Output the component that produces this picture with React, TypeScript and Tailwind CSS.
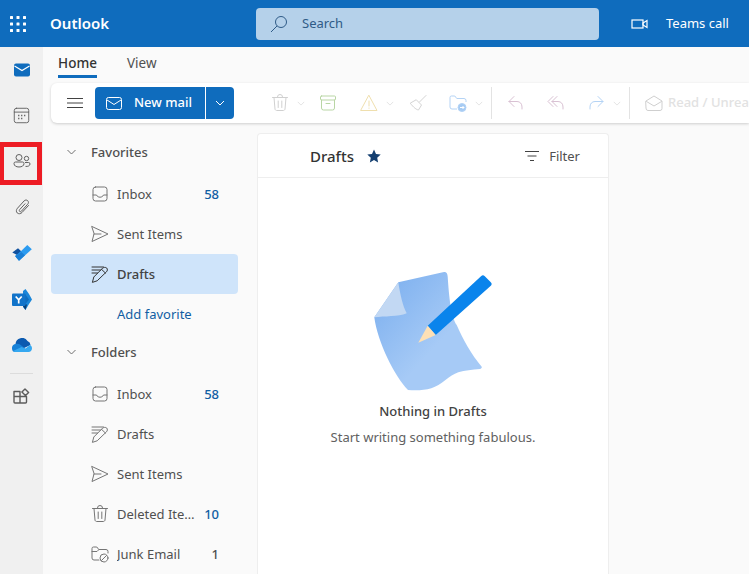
import type { ReactNode } from "react"

function Icon({ size = 20, className = "", children }: { size?: number; className?: string; children: ReactNode }) {
  return (
    <svg width={size} height={size} viewBox="0 0 20 20" fill="none" stroke="currentColor" strokeWidth={1} strokeLinecap="round" strokeLinejoin="round" className={className}>
      {children}
    </svg>
  )
}

const Chevron = ({ className = "" }: { className?: string }) => (
  <svg width="10" height="6" viewBox="0 0 10 6" fill="none" stroke="currentColor" className={className}>
    <path d="M1 1l4 4 4-4" />
  </svg>
)

const InboxIcon = () => (
  <Icon>
    <rect x="3" y="3" width="14" height="14" rx="2.5" />
    <path d="M3 11h3.5c.6 1.4 1.9 2.2 3.5 2.2s2.9-.8 3.5-2.2H17" />
  </Icon>
)
const SentIcon = () => (
  <Icon>
    <path d="M2 2.5L18 10 2 17.5 4 10zM4 10H11" />
  </Icon>
)
const DraftIcon = () => (
  <Icon>
    <path d="M2 3h11.500M2 6h8.500M2 9h5.500M2.500 18l1.300-5 8.700-8.700c1-1 3.200-1.300 4.200-.3 1 1.200.8 2.800-.2 3.800L7.500 16.500zM11.500 5.300l4 3.800" />
  </Icon>
)
const TrashIcon = () => (
  <Icon>
    <path d="M2.500 4.500h15M7.500 4.500V4a2.500 2.500 0 015 0v.5M4 4.500l1 11.500c.1 1 1 1.500 1.800 1.500h6.400c.8 0 1.700-.5 1.800-1.500l1-11.500M8.200 8v6.500M11.800 8v6.500" />
  </Icon>
)
const JunkIcon = () => (
  <Icon>
    <path d="M9 16H4a2 2 0 01-2-2V4.500A1.500 1.500 0 013.500 3h3.300l2 2.500H16a2 2 0 012 2V9M2 7.500h5l2-2" />
    <circle cx="14" cy="14" r="4" />
    <path d="M11.500 16.500l5-5" />
  </Icon>
)

function NavRow({ icon, label, count, active }: { icon?: ReactNode; label: string; count?: string; active?: boolean }) {
  return (
    <div className={`flex h-10 items-center rounded pl-[39px] pr-[19px] ${active ? "bg-[#cfe4fa] font-medium text-[#424242]" : "text-[#505050]"}`}>
      {icon ? <span className={`flex w-[27px] ${active ? "text-[#333333]" : "text-[#757575]"}`}>{icon}</span> : <span className="w-[27px]" />}
      <span className="min-w-0 flex-1 truncate pr-[9px] pt-[2px]">{label}</span>
      {count && <span className={`pt-[2px] font-medium ${count === "1" ? "text-[#505050]" : "text-[#115ea3]"}`}>{count}</span>}
    </div>
  )
}

function NavHeading({ label }: { label: string }) {
  return (
    <div className="flex h-10 items-center pb-1 pl-[15px] font-medium text-[#505050]">
      <Chevron className="mr-[14px] h-[6px] w-[11px] text-[#707070]" />
      <span className="pt-[2px]">{label}</span>
    </div>
  )
}

function RailItem({ first, children }: { first?: boolean; children: ReactNode }) {
  return <div className={`flex items-center justify-center text-[#616161] ${first ? "h-[45px]" : "h-[46px]"}`}>{children}</div>
}

function ToolSlot({ className, chevron, children }: { className: string; chevron?: boolean; children: ReactNode }) {
  return (
    <div className={`flex shrink-0 items-center gap-[7px] ${className}`}>
      {children}
      {chevron && <Chevron className="h-[5px] w-[8px] text-[#dddddd]" />}
    </div>
  )
}

export default function App() {
  return (
    <div className="relative flex h-[574px] w-[749px] flex-col overflow-hidden bg-[#fafafa] font-['Noto_Sans',sans-serif] text-[13px] text-[#424242]">
      <header className="flex h-[47px] shrink-0 items-center bg-[#0f6cbd] text-white">
        <div className="flex w-[50px] justify-center pr-[14px]">
          <svg width="16" height="16" viewBox="0 0 16 16" fill="white">
            {[0, 6.5, 13].map((y) =>
              [0, 6.5, 13].map((x) => <rect key={`${x}-${y}`} x={x} y={y} width="3" height="3" rx="0.5" />),
            )}
          </svg>
        </div>
        <span className="w-[206px] text-[15px] font-semibold">Outlook</span>
        <div className="flex h-[32px] w-[343px] items-center rounded bg-[#b5d1ea] pl-[14px] text-[#2f5b87]">
          <svg width="18" height="18" viewBox="0 0 18 18" fill="none" stroke="currentColor" className="mr-[14px]">
            <circle cx="11" cy="7" r="5.500" />
            <path d="M7 11l-6 6" />
          </svg>
          Search
        </div>
        <svg width="18" height="12" viewBox="0 0 18 12" fill="none" stroke="white" strokeWidth="1.200" className="ml-[32px] mr-[17px]">
          <rect x="1" y="2" width="11" height="8" />
          <path d="M12 5l4-2.500v7L12 7z" />
        </svg>
        <span>Teams call</span>
      </header>

      <div className="flex min-h-0 flex-1">
        <nav className="w-[43px] shrink-0 bg-[#f0f0f0]">
          <RailItem first>
            <svg width="18" height="14" viewBox="0 0 18 14">
              <rect x="1" y="0.500" width="16" height="13" rx="2" fill="#0f6cbd" />
              <path d="M1.500 3l7.500 4.500L16.500 3" fill="none" stroke="white" strokeWidth="1.200" />
            </svg>
          </RailItem>
          <RailItem>
            <Icon size={17}>
              <rect x="1.500" y="1.500" width="17" height="17" rx="2.500" strokeWidth="1.100" />
              <path d="M1.500 6h17" strokeWidth="1.100" />
              <path d="M6 10h1.500M9.500 10H11M13 10h1.500M6 13.500h1.500M9.500 13.500H11" strokeWidth="1.600" strokeLinecap="butt" />
            </Icon>
          </RailItem>
          <RailItem>
            <svg width="18" height="14" viewBox="0 0 18 14" fill="none" stroke="currentColor">
              <circle cx="6" cy="3.500" r="3" />
              <circle cx="13.500" cy="4.500" r="2.200" />
              <path d="M1 9.500a1.500 1.500 0 011.500-1.500h7a1.500 1.500 0 011.500 1.500c0 2.300-2.200 3.500-5 3.500s-5-1.200-5-3.500zM12 8.500h3.500a1.500 1.500 0 011.500 1.500c0 1.700-2 2.700-4.500 2.400" />
            </svg>
          </RailItem>
          <RailItem>
            <Icon size={20}>
              <path d="M16.500 8.500l-6.500 7c-1.400 1.500-3.500 1.600-4.800.4-1.200-1.200-1.100-3.200.3-4.700L12 4c1.100-1.200 2.700-1.300 3.700-.3s1 2.400 0 3.500l-6.300 7c-.6.600-1.300.7-1.800.2s-.4-1.200.1-1.800l5.300-5.800" />
            </Icon>
          </RailItem>
          <RailItem>
            <svg width="20" height="17" viewBox="0 0 20 17">
              <path d="M0.300 7.500L6 3.300l4.500 4.200-3.500 3.500z" fill="#11529f" />
              <path d="M3 11l4 4.500 6-6-4-3.500z" fill="#0f78d4" />
              <path d="M7 15.800L19.800 4.200 15.300 0 3.500 11.500z" fill="#2b9bf0" />
              <path d="M7 15.800l6-5.500-3.700-3.400L3.500 11.500z" fill="#1a7fd6" />
            </svg>
          </RailItem>
          <RailItem>
            <svg width="20" height="21" viewBox="0 0 20 21">
              <path d="M11 2l2.500-2L17 5l3 5.500L17 15l-3.500 6-2.500-3z" fill="#1a86d9" />
              <path d="M13 5l4 5.500-4 5z" fill="#0f6cbd" />
              <path d="M10 15.500h5l-1.500 5.500z" fill="#0a3f75" />
              <rect x="0" y="4.500" width="13.500" height="12.500" rx="1" fill="#1173c9" />
              <path d="M3.700 7.500l3 3.300 3-3.300M6.700 10.800v3.700" fill="none" stroke="white" strokeWidth="1.700" />
            </svg>
          </RailItem>
          <RailItem>
            <svg width="20" height="14" viewBox="0 0 20 14">
              <path d="M3.500 6a6.500 6.500 0 0112-3 4.500 4.500 0 013 4L10 11z" fill="#0b5ab0" />
              <path d="M0 10.500A4 4 0 014 6c2.500-.8 4.500.5 6 2l3 2.500L6 14H3.500A3.500 3.500 0 010 10.500z" fill="#1681d8" />
              <path d="M3.500 14c-1 0-1.800-.4-2.300-1l8.300-4 4 1.500L18 7c1.200.5 2 1.800 2 3.200 0 2-1.500 3.800-3.500 3.800z" fill="#35a8f0" />
            </svg>
          </RailItem>
          <div className="mx-[10px] mt-[5px] h-px bg-[#dcdcdc]" />
          <div className="flex h-[44px] items-center justify-center text-[#5c5c5c]">
            <svg width="17" height="16" viewBox="0 0 17 16" fill="none" stroke="currentColor" strokeWidth="1.400" strokeLinejoin="round">
              <path d="M1 3.500h6v5H1zM1 8.500h6V15H2a1 1 0 01-1-1zM7 8.500h6.500V14a1 1 0 01-1 1H7zM12 .9l3.600 3.600-3.100 3.100-3.600-3.600z" />
            </svg>
          </div>
        </nav>

        <div className="flex min-w-0 flex-1 flex-col">
          <div className="flex h-[36px] shrink-0 items-start pl-[15px] pt-[6px] text-[13.500px]">
            <div className="flex h-[25px] w-[39px] justify-center border-b-[3px] border-[#0f6cbd] font-medium text-[#333333]">Home</div>
            <div className="ml-[30px] text-[#505050]">View</div>
          </div>

          <div className="ml-[8px] flex h-[40px] shrink-0 items-center overflow-hidden rounded-l-md bg-white pl-[16px] shadow-[0_1px_3px_rgba(0,0,0,0.18)]">
            <svg width="16" height="12" viewBox="0 0 16 12" stroke="#424242" className="mr-[12px] shrink-0">
              <path d="M0 1.500h16M0 6h16M0 10.500h16" />
            </svg>
            <div className="flex h-[32px] w-[110px] shrink-0 items-center rounded-l bg-[#0f6cbd] pl-[11px] font-medium text-white">
              <svg width="16" height="13" viewBox="0 0 16 13" fill="none" stroke="white" className="mr-[12px]">
                <rect x="0.500" y="0.500" width="15" height="12" rx="2" />
                <path d="M1 3l7 4.500L15 3" />
              </svg>
              New mail
            </div>
            <div className="ml-px flex h-[32px] w-[28px] shrink-0 items-center justify-center rounded-r bg-[#0f6cbd] text-white">
              <Chevron />
            </div>
            <div className="flex h-full flex-1 items-center">
              <ToolSlot className="ml-[36px]" chevron>
                <span className="flex text-[#d0d0d0]"><TrashIcon /></span>
              </ToolSlot>
              <ToolSlot className="ml-[13px]">
                <Icon>
                  <g stroke="#b9d6a5">
                    <rect x="2.500" y="3" width="15" height="4" rx="1" />
                    <path d="M3.500 7v8a2 2 0 002 2h9a2 2 0 002-2V7M8 10.500h4" />
                  </g>
                </Icon>
              </ToolSlot>
              <ToolSlot className="ml-[21px]" chevron>
                <Icon>
                  <g stroke="#efdfae">
                    <path d="M10 2.500L18 17.500H2zM10 8v5M10 15v.3" />
                  </g>
                </Icon>
              </ToolSlot>
              <ToolSlot className="ml-[14px]">
                <Icon>
                  <g stroke="#d4d4d4">
                    <path d="M18 2.500L11.500 9M8.500 7l5 5-3 5c-2-.3-5-2.500-8-6.500z" />
                  </g>
                </Icon>
              </ToolSlot>
              <ToolSlot className="ml-[20px]" chevron>
                <svg width="20" height="20" viewBox="0 0 20 20" fill="none" stroke="#b4d3f5">
                  <path d="M9 16H4a2 2 0 01-2-2V4.500A1.500 1.500 0 013.500 3h3.300l2 2.500H16a2 2 0 012 2V9" />
                  <circle cx="14" cy="14.500" r="4" fill="#a6cbf3" />
                  <path d="M12 14.500h4M14.500 13l1.500 1.500L14.500 16" stroke="white" />
                </svg>
              </ToolSlot>
              <div className="ml-[8px] h-[32px] w-px shrink-0 bg-[#e3e3e3]" />
              <ToolSlot className="ml-[14px]">
                <Icon>
                  <g stroke="#d9c1d3">
                    <path d="M8 3.500L3 8.500l5 5M3 8.500h8c3 0 5 2.200 5 5.500v2" />
                  </g>
                </Icon>
              </ToolSlot>
              <ToolSlot className="ml-[20px]">
                <Icon>
                  <g stroke="#d9c1d3">
                    <path d="M7 3.500L2 8.500l5 5M11 3.500L6 8.500l5 5M6 8.500h6c3 0 5 2.200 5 5.500v2" />
                  </g>
                </Icon>
              </ToolSlot>
              <ToolSlot className="ml-[20px]" chevron>
                <Icon>
                  <g stroke="#b4d3f5">
                    <path d="M12 3.500l5 5-5 5M17 8.500H9c-3 0-5 2.200-5 5.500v2" />
                  </g>
                </Icon>
              </ToolSlot>
              <div className="ml-[8px] mr-[14px] h-[32px] w-px shrink-0 bg-[#e3e3e3]" />
              <Icon>
                <g stroke="#cfcfcf">
                  <path d="M2 8l8-5 8 5v7.500a2 2 0 01-2 2H4a2 2 0 01-2-2zM2.500 8.500L10 13l7.500-4.500" />
                </g>
              </Icon>
              <span className="ml-[4px] shrink-0 whitespace-nowrap font-medium text-[#e2e2e2]">Read / Unread</span>
            </div>
          </div>

          <div className="flex min-h-0 flex-1">
            <aside className="w-[214px] shrink-0 overflow-hidden pl-[8px] pr-[19px] pt-[11px]">
              <NavHeading label="Favorites" />
              <NavRow icon={<InboxIcon />} label="Inbox" count="58" />
              <NavRow icon={<SentIcon />} label="Sent Items" />
              <NavRow icon={<DraftIcon />} label="Drafts" active />
              <div className="flex h-10 items-center pl-[66px] pt-[2px] text-[#115ea3]">Add favorite</div>
              <NavHeading label="Folders" />
              <NavRow icon={<InboxIcon />} label="Inbox" count="58" />
              <NavRow icon={<DraftIcon />} label="Drafts" />
              <NavRow icon={<SentIcon />} label="Sent Items" />
              <NavRow icon={<TrashIcon />} label="Deleted Items" count="10" />
              <NavRow icon={<JunkIcon />} label="Junk Email" count="1" />
            </aside>

            <section className="mt-[10px] flex w-[352px] shrink-0 flex-col rounded-t border border-b-0 border-[#eeeeee] bg-white">
              <div className="flex h-[44px] shrink-0 items-center border-b border-[#eeeeee] pl-[52px] pr-[28px]">
                <span className="pt-[2px] text-[15px] font-medium text-[#333333]">Drafts</span>
                <svg width="14" height="14" viewBox="0 0 14 14" fill="#143f70" className="ml-[13px]">
                  <path d="M7 .6l2 4.300 4.700.6-3.500 3.200.9 4.700L7 11.100l-4.100 2.300.9-4.700L.3 5.500 5 4.900z" />
                </svg>
                <svg width="14" height="12" viewBox="0 0 14 12" stroke="#424242" className="ml-auto mr-[10px]">
                  <path d="M0 1.500h14M2.500 6h9M5 10.500h4" />
                </svg>
                <span className="pt-[2px] text-[#505050]">Filter</span>
              </div>
              <div className="flex flex-col items-center pt-[94px]">
                <svg width="119" height="119" viewBox="0 0 119 119">
                  <defs>
                    <linearGradient id="paper" x1="0" y1="0" x2="1" y2="1">
                      <stop offset="0.1" stopColor="#7fb1ef" />
                      <stop offset="0.6" stopColor="#a6caf6" />
                    </linearGradient>
                  </defs>
                  <path d="M24.300 10.300L70 0c2-.3 3.500 1 3.700 4.700C75 25 77 45 82.700 53c6 14 15 30 25 41.700 .5 1-.5 2-1.700 2.300-8 1-15 1-21.700 3.300-9 3-17 13-27 16-7 2-15 2.500-23.300 1.700C21 105 3.500 70 .3 45.300z" fill="url(#paper)" />
                  <path d="M24.300 10.300L.3 45.300c10-1.200 24-.5 32.400-4-4-7-6.700-20-8.400-31z" fill="#c2d8f3" />
                  <path d="M53.700 53.700L107 4.200c1.500-1.300 2.500-1.200 3.800 0l6 6c1.300 1.300 1 2.500 0 3.500L61.700 63z" fill="#0a84ec" />
                  <path d="M53.700 53.700l8 9.300-17.400 7.700z" fill="#fde0b5" />
                </svg>
                <div className="mt-[11px] font-medium text-[#424242]">Nothing in Drafts</div>
                <div className="mt-[6px] text-[#616161]">Start writing something fabulous.</div>
              </div>
            </section>
          </div>
        </div>
      </div>

      {/* red annotation around the People icon */}
      <div className="absolute left-0 top-[142px] h-[43px] w-[42px] border-[5px] border-l-4 border-[#ed1c24]" />
    </div>
  )
}
